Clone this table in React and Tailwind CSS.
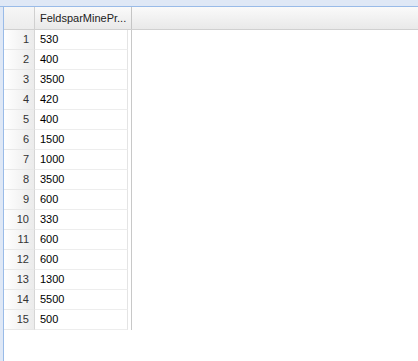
import React from "react";

const rows = [530, 400, 3500, 420, 400, 1500, 1000, 3500, 600, 330, 600, 600, 1300, 5500, 500];

export default function App() {
  return (
    <div
      className="w-[418px] h-[361px] bg-white flex flex-col text-[11px] text-black"
      style={{ fontFamily: '"Liberation Sans", Arial, sans-serif' }}
    >
      <div className="h-[7px] bg-[#dfe8f6] border-b border-[#99bbe8] shrink-0" />
      <div className="flex flex-1">
        <div className="w-[4px] bg-[#dfe8f6] border-r border-[#99bbe8] shrink-0" />
        <div className="flex-1 flex flex-col">
          <div className="h-[23px] flex bg-gradient-to-b from-[#fafafa] to-[#e9e9e9] border-b border-[#d0d0d0] shrink-0">
            <div className="w-[31px] border-r border-[#d0d0d0] bg-gradient-to-b from-[#f6f6f6] to-[#ececec]" />
            <div className="w-[97px] border-r border-[#c5c5c5] flex items-center pl-[5px] text-[#222]">
              FeldsparMinePr...
            </div>
          </div>
          {rows.map((v, i) => (
            <div key={i} className="h-[20px] flex shrink-0">
              <div className="w-[31px] flex items-center justify-end pr-[5px] bg-gradient-to-r from-[#ffffff] to-[#ebebeb] border-r border-[#d6d6d6] border-b border-b-[#e8e8e8] text-[#333]">
                {i + 1}
              </div>
              <div className="w-[93px] flex items-center pl-[5px] border-b border-[#ededed] border-r border-r-[#e4e4e4]">
                {v}
              </div>
              <div className="w-[3px]" />
              <div className="w-[1px] bg-[#c8c8c8]" />
            </div>
          ))}
        </div>
      </div>
    </div>
  );
}
